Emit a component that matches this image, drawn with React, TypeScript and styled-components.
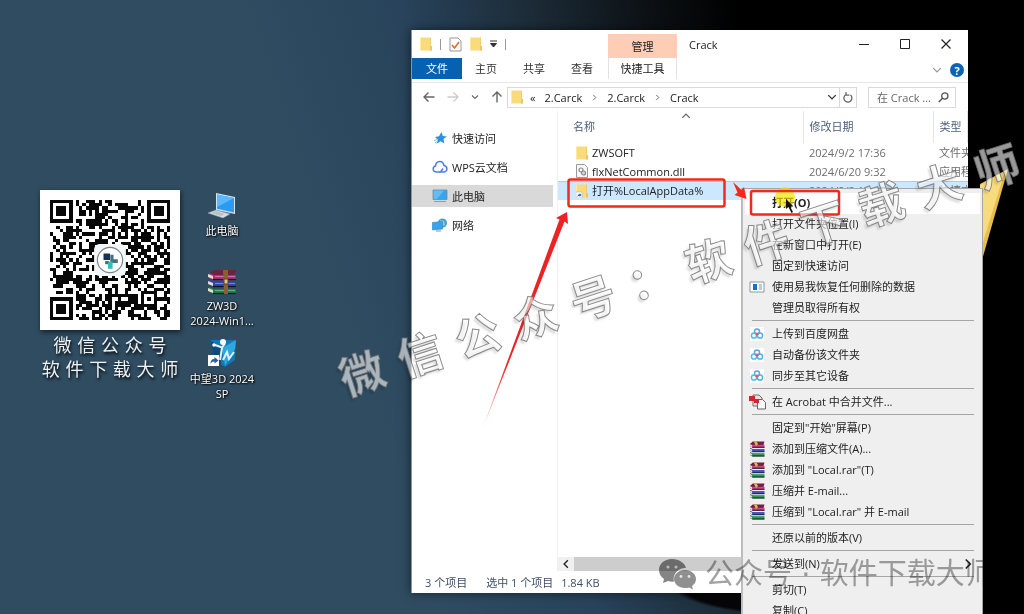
import React from "react";
import styled, { createGlobalStyle } from "styled-components";

const GlobalStyle = createGlobalStyle`
  * { box-sizing: border-box; }
  body { margin: 0; background: #000; }
  button, input { font: inherit; color: inherit; }
  svg { display: block; flex: none; }
`;

const uiFont = `"Open Sans", "Noto Sans CJK SC", sans-serif`;

const Desktop = styled.main`
  position: relative;
  display: flex;
  align-items: flex-start;
  gap: 2px;
  min-height: 100vh;
  padding: 190px 0 0 40px;
  overflow: hidden;
  font: 11px/15px ${uiFont};
  color: #222;
  background:
    radial-gradient(ellipse 120px 32px at 790px 583px, #060608 92%, transparent 100%),
    linear-gradient(90deg, transparent 960px, #000 980px),
    linear-gradient(72deg, #2f4c61 0, #2f4c61 420px, #28435b 570px, #1d2d3a 684px, #0d1216 798px, #000 889px);
`;

const Wallpaper = styled.svg`
  position: absolute;
  right: 14px;
  top: 168px;
`;

const QrPanel = styled.section`
  display: flex;
  flex-direction: column;
  align-items: center;
  width: 140px;
`;

const QrCard = styled.div`
  position: relative;
  padding: 10px;
  margin-bottom: 4px;
  background: #fff;
  box-shadow: 1px 2px 5px rgba(0, 0, 0, 0.6);
`;

const QrCaption = styled.p`
  margin: 0;
  font: 18px/24px "DejaVu Sans", "Noto Sans CJK SC", sans-serif;
  font-weight: 400;
  white-space: nowrap;
  color: #eef2f4;
  text-shadow: 1px 2px 3px #000;
`;

const Shortcuts = styled.nav`
  display: flex;
  flex-direction: column;
  align-items: center;
  width: 80px;
  padding-top: 2px;
`;

const Shortcut = styled.button<{ $space: number }>`
  display: flex;
  flex-direction: column;
  align-items: center;
  gap: 3px;
  width: 100%;
  margin: 0 0 ${(p) => p.$space}px;
  padding: 0;
  border: 0;
  background: none;
  color: #fff;
  text-shadow: 1px 1px 2px #000, 0 0 2px #000;
  span { white-space: pre-line; }
`;

const Window = styled.section`
  position: absolute;
  left: 411px;
  right: 56px;
  top: 30px;
  bottom: 21px;
  display: flex;
  flex-direction: column;
  border-left: 1px solid #8b959c;
  background: #fff;
  box-shadow: 0 0 10px rgba(0, 0, 0, 0.55);
  overflow: hidden;
`;

const Ribbon = styled.header`
  display: flex;
  height: 53px;
  border-bottom: 1px solid #e6e6e6;
`;

const RibbonLeft = styled.div`
  display: flex;
  flex-direction: column;
  width: 196px;
`;

const QuickBar = styled.div`
  display: flex;
  align-items: center;
  gap: 8px;
  height: 28px;
  padding-left: 8px;
`;

const Tick = styled.span`
  width: 1px;
  height: 11px;
  background: #999;
`;

const Tabs = styled.div`
  display: flex;
  height: 21px;
`;

const Tab = styled.button<{ $file?: boolean }>`
  width: ${(p) => (p.$file ? 50 : 48)}px;
  padding: 0;
  border: 0;
  background: ${(p) => (p.$file ? "#0662b0" : "none")};
  color: ${(p) => (p.$file ? "#fff" : "#333")};
`;

const ToolTabs = styled.div`
  display: flex;
  flex-direction: column;
  width: 69px;
  padding-top: 4px;
`;

const ToolTab = styled.button<{ $head?: boolean }>`
  height: ${(p) => (p.$head ? 24 : 21)}px;
  padding: 0;
  border: solid #e2e2e2;
  border-width: ${(p) => (p.$head ? "0" : "0 1px")};
  background: ${(p) => (p.$head ? "#fdcdb5" : "#fff")};
`;

const TitleArea = styled.div`
  display: flex;
  flex: 1;
  flex-direction: column;
`;

const TitleRow = styled.div`
  display: flex;
  align-items: center;
  height: 28px;
  padding: 0 2px 0 12px;
`;

const Title = styled.h1`
  flex: 1;
  margin: 0;
  font-size: 11px;
  font-weight: 400;
`;

const WinButton = styled.button`
  display: grid;
  place-items: center;
  width: 41px;
  height: 28px;
  padding: 0;
  border: 0;
  background: none;
`;

const HelpRow = styled.div`
  display: flex;
  align-items: center;
  justify-content: flex-end;
  gap: 8px;
  height: 23px;
  padding-right: 4px;
`;

const PlainButton = styled.button`
  padding: 0;
  border: 0;
  background: none;
  display: grid;
  place-items: center;
`;

const HelpButton = styled(PlainButton)`
  width: 14px;
  height: 14px;
  border-radius: 50%;
  background: #0a64b4;
  color: #fff;
  font-weight: 700;
`;

const NavBar = styled.div`
  display: flex;
  align-items: center;
  height: 28px;
  padding: 0 12px 0 11px;
`;

const NavArrows = styled.div`
  display: flex;
  align-items: center;
  gap: 12px;
  width: 84px;
`;

const AddressBox = styled.div`
  display: flex;
  flex: 1;
  align-items: center;
  height: 21px;
  border: 1px solid #d9d9d9;
  padding-left: 3px;
`;

const Crumbs = styled.div`
  display: flex;
  flex: 1;
  align-items: center;
  gap: 9px;
  padding-left: 7px;
  white-space: nowrap;
`;

const RefreshButton = styled(PlainButton)`
  width: 17px;
  height: 19px;
  margin-left: 2px;
  border-left: 1px solid #d9d9d9;
`;

const SearchBox = styled.label`
  display: flex;
  align-items: center;
  width: 88px;
  height: 21px;
  margin-left: 11px;
  padding: 0 6px 0 8px;
  border: 1px solid #d9d9d9;
  input {
    flex: 1;
    min-width: 0;
    padding: 0;
    border: 0;
    outline: 0;
    background: none;
    color: #666;
  }
`;

const Body = styled.div`
  display: flex;
  flex: 1;
  min-height: 0;
`;

const Sidebar = styled.nav`
  display: flex;
  flex-direction: column;
  gap: 7px;
  width: 146px;
  padding: 16px 4px 0 0;
  border-right: 1px solid #f0f0f0;
`;

const SideItem = styled.button<{ $active?: boolean }>`
  display: flex;
  align-items: center;
  gap: 4px;
  height: 22px;
  padding: 0 0 0 20px;
  border: 0;
  background: ${(p) => (p.$active ? "#d9d9d9" : "none")};
`;

const Files = styled.div`
  display: flex;
  flex: 1;
  flex-direction: column;
  min-width: 0;
  overflow: hidden;
`;

const FileTable = styled.table`
  width: 100%;
  table-layout: fixed;
  border-collapse: collapse;
  margin-bottom: auto;
`;

const HeadCell = styled.th<{ $width?: number; $indent?: number }>`
  position: relative;
  width: ${(p) => (p.$width ? `${p.$width}px` : "auto")};
  height: 32px;
  padding: 0 0 2px ${(p) => p.$indent ?? 6}px;
  border-right: 1px solid #e5e5e5;
  color: #4c607a;
  font-weight: 400;
  text-align: left;
  white-space: nowrap;
  svg { position: absolute; right: 112px; top: 0; }
`;

const Row = styled.tr<{ $selected?: boolean }>`
  height: 19px;
  background: ${(p) => (p.$selected ? "#cce8ff" : "none")};
  color: #6d6d6d;
  border-top: ${(p) => (p.$selected ? "1px solid #99d1ff" : "0")};
`;

const Cell = styled.td`
  padding: 0 0 0 6px;
  white-space: nowrap;
  overflow: hidden;
`;

const NameCell = styled(Cell)`
  padding-left: 18px;
  color: #222;
  > span { display: flex; align-items: center; gap: 4px; }
`;

const Scroll = styled.div`
  display: flex;
  height: 14px;
  background: #cdcdcd;
`;

const ScrollButton = styled(PlainButton)`
  width: 16px;
  background: #f0f0f0;
`;

const Status = styled.footer`
  display: flex;
  align-items: center;
  gap: 19px;
  height: 22px;
  padding-left: 13px;
  color: #3d4f66;
  span + span + span { margin-left: -11px; }
`;

const Menu = styled.ul`
  position: absolute;
  left: 741px;
  right: 41px;
  top: 188px;
  margin: 0;
  padding: 4px 2px;
  list-style: none;
  border: 1px solid #a6a6a6;
  border-left: 2px solid #bdbdbd;
  background: #efefef;
`;

const Clip = styled.div`
  position: absolute;
  inset: 0;
  overflow: hidden;
`;

const MenuButton = styled.button<{ $hot?: boolean }>`
  display: flex;
  align-items: center;
  width: 100%;
  height: 21px;
  padding: 0 6px 2px 4px;
  border: 0;
  background: ${(p) => (p.$hot ? "#fff" : "none")};
  font-weight: ${(p) => (p.$hot ? 700 : 400)};
  white-space: nowrap;
`;

const MenuIcon = styled.span`
  display: flex;
  width: 23px;
`;

const MenuText = styled.span`
  flex: 1;
  text-align: left;
`;

const Separator = styled.li`
  height: 5px;
  padding-top: 1px;
  margin: 0 6px 0 7px;
  &::before { content: ""; display: block; height: 1px; background: #a5a5a5; }
`;

const Marks = styled.svg`
  position: absolute;
  left: 0;
  top: 0;
  pointer-events: none;
`;

const Slogan = styled.p`
  position: absolute;
  left: 324px;
  top: 242px;
  margin: 0;
  font: 700 45px/60px "DejaVu Sans", "Noto Sans CJK SC", sans-serif;
  white-space: nowrap;
  transform: rotate(-18deg);
  color: rgba(255, 255, 255, 0.6);
  -webkit-text-stroke: 1px rgba(110, 110, 110, 0.8);
  text-shadow: -3px 2px 2px rgba(0, 0, 0, 0.12);
  pointer-events: none;
`;

const Account = styled.div`
  position: absolute;
  left: 658px;
  bottom: 22px;
  display: flex;
  align-items: center;
  gap: 8px;
  font: 29px/36px "DejaVu Sans", "Noto Sans CJK SC", sans-serif;
  white-space: nowrap;
  color: #a3a3a3;
  mix-blend-mode: multiply;
  pointer-events: none;
`;

const SIZE = 37;

function buildModules(): string {
  let seed = 20249;
  const next = () => {
    seed = (seed * 1103515245 + 12345) & 0x7fffffff;
    return (seed >> 8) / 0x7fffff;
  };
  let d = "";
  const ring = (x: number, y: number, cx: number, cy: number) =>
    Math.max(Math.abs(x - cx), Math.abs(y - cy));
  for (let y = 0; y < SIZE; y++) {
    for (let x = 0; x < SIZE; x++) {
      const noise = next() > 0.46;
      const finder = Math.min(ring(x, y, 3, 3), ring(x, y, 33, 3), ring(x, y, 3, 33));
      const align = ring(x, y, 30, 30);
      let dark = noise;
      if (finder <= 4) dark = finder !== 2 && finder !== 4;
      else if (align <= 2) dark = align !== 1;
      else if (ring(x, y, 18, 18) <= 4) dark = false;
      if (dark) d += `M${x} ${y}h1v1h-1z`;
    }
  }
  return d;
}

const modules = buildModules();

const QrCode = () => (
  <svg width="120" height="120" viewBox="0 0 37 37" role="img" aria-label="QR">
    <path d={modules} fill="#080808" shapeRendering="crispEdges" />
    <rect x="13.6" y="13.6" width="9.8" height="9.8" rx="1.6" fill="#f4f7f7" />
    <circle cx="18.5" cy="18.5" r="3.9" fill="#fff" stroke="#788489" strokeWidth=".35" />
    <path d="M16.5 16.5h2v2h-2z" fill="#17324f" />
    <path d="M18.6 16.9h1v1.4h1.3v1.1h-2.3zM17 18.8h1.2v1H17z" fill="#476e84" />
    <path d="M17.9 19h1.4v2.2h-1.4z" fill="#2cc0b8" />
  </svg>
);

const Folder = ({ link }: { link?: boolean }) => (
  <svg width="12" height="14" viewBox="0 0 12 14">
    <path d="M0 .5h10.500V9H12v4.500H0z" fill="#fadb7c" />
    <path d="M10 .5h.8V9H12v4.500h-2z" fill="#ecc75c" />
    <path d="M0 .5h1v13H0z" fill="#ffe9a3" />
    {link && (
      <>
        <path d="M0 8h6v6H0z" fill="#fff" stroke="#9ab" strokeWidth=".5" />
        <path d="M1.500 13c0-2 1-2.700 2-2.700V9.200L5.500 11l-2 1.700v-1c-1 0-1.500.3-2 1.300z" fill="#175cab" />
      </>
    )}
  </svg>
);

const DocCheck = () => (
  <svg width="13" height="15" viewBox="0 0 13 15">
    <path d="M1 1h8l3 3v10H1z" fill="#fff" stroke="#999" />
    <path d="M3 8l2.500 3L10 5" fill="none" stroke="#e26a2c" strokeWidth="1.600" />
  </svg>
);

const DllIcon = () => (
  <svg width="12" height="14" viewBox="0 0 12 14">
    <path d="M.5.5h8l3 3v10H.5z" fill="#f7f7f7" stroke="#999" />
    <circle cx="5" cy="6" r="2" fill="none" stroke="#888" strokeWidth="1.200" />
    <circle cx="7.500" cy="9" r="2" fill="#ddd" stroke="#888" strokeWidth="1.200" />
  </svg>
);

const Chevron = ({ dir, size = 7, color = "#666" }: { dir: "down" | "up" | "left" | "right"; size?: number; color?: string }) => {
  const turn = { down: 0, left: 90, up: 180, right: 270 }[dir];
  return (
    <svg width={size} height={size} viewBox="0 0 8 8">
      <path d="M1 2.500l3 3 3-3" fill="none" stroke={color} strokeWidth="1.100" transform={`rotate(${turn} 4 4)`} />
    </svg>
  );
};

const Arrow = ({ turn, color }: { turn: number; color: string }) => (
  <svg width="12" height="12" viewBox="0 0 12 12">
    <path d="M11.500 6H1M5.500 1.500L1 6l4.500 4.500" fill="none" stroke={color} strokeWidth="1.400" transform={`rotate(${turn} 6 6)`} />
  </svg>
);

const StarIcon = () => (
  <svg width="16" height="14" viewBox="0 0 16 14">
    <path d="M9.500 1l1.300 4 4 .5-3.300 2.600.8 4.400-3.600-2.300L4.500 12.700l1.400-4L3 6l4-.7z" fill="#2a93e0" />
    <path d="M2 10l3-2M3 12l3-2" stroke="#7cc0ef" />
  </svg>
);

const CloudIcon = () => (
  <svg width="16" height="14" viewBox="0 0 16 14">
    <path d="M4 12a3 3 0 0 1-.5-5.900C4 0 11 0 12 5.500a3.300 3.300 0 0 1 .3 6.500H8.500L11 8.500" fill="none" stroke="#4a7fe0" strokeWidth="1.500" />
    <path d="M4 12h4" stroke="#4a7fe0" strokeWidth="1.500" />
  </svg>
);

const MonitorIcon = () => (
  <svg width="16" height="14" viewBox="0 0 16 14">
    <path d="M1 1h14v9.500H1z" fill="#3ba3ea" stroke="#6f8ba0" strokeWidth=".8" />
    <path d="M1.500 1.500H12L5 10H1.500z" fill="#62bdf5" />
    <path d="M2 12.500h12" stroke="#8ba3b3" strokeWidth="1.200" />
  </svg>
);

const NetworkIcon = () => (
  <svg width="16" height="14" viewBox="0 0 16 14">
    <circle cx="10.500" cy="5" r="4.600" fill="#4d9fca" />
    <path d="M8 2l4 1 1 4-3 1z" fill="#8fd0dc" />
    <path d="M.5 4.500l10-1v7.500l-10 1z" fill="#3aa4ea" stroke="#2983c4" strokeWidth=".6" />
    <path d="M4 13h5" stroke="#7d98aa" />
  </svg>
);

const Books = ({ large }: { large?: boolean }) => (
  <svg width={large ? 30 : 16} height={large ? 26 : 16} viewBox="0 0 30 26" preserveAspectRatio="none">
    <path d="M2 5l5-4h22l-2 6H6z" fill="#6d2340" />
    {[
      ["#b72a78", 4],
      ["#3046b4", 11],
      ["#178447", 18],
    ].map(([color, y]) => (
      <g key={color} transform={`translate(0 ${y})`}>
        <path d="M2 0l5 2h22v5H7L2 5z" fill={color as string} />
        <path d="M1 1l5 2v3L1 4z" fill="#e9ddd0" />
        <path d="M6 6.500h23" stroke="#151515" strokeWidth="1.200" />
        <path d="M8 3.500h20" stroke="#fff" strokeOpacity=".35" />
      </g>
    ))}
    {large ? (
      <>
        <path d="M16 1h5v24h-4z" fill="#8d5f2c" />
        <path d="M17 10h4v5h-4z" fill="#ddc58d" stroke="#5a4020" />
      </>
    ) : (
      <path d="M9 1l5 0 3 4-4 3z" fill="#e5b93f" />
    )}
  </svg>
);

const PcLarge = () => (
  <svg width="32" height="28" viewBox="0 0 32 28">
    <path d="M10 1l19 4v17l-19-4z" fill="#d8e4ec" />
    <path d="M11 2.500l17 3.600V20.500L11 16.800z" fill="#2c9af0" />
    <path d="M11 2.500l17 3.600L11 15z" fill="#5cb8fa" />
    <path d="M2 21l8-3 14 4-7 4z" fill="#d9dfe4" stroke="#8fa0ac" strokeWidth=".6" />
    <path d="M5 21l5-2 9 3-4 2z" fill="#b6c2ca" />
  </svg>
);

const ZwLarge = () => (
  <svg width="32" height="30" viewBox="0 0 32 30">
    <path d="M4 2h26l-1 20-10 7-10-6z" fill="#1377b7" />
    <path d="M4 2l11 8v17l-6-4z" fill="#0a4c7c" />
    <path d="M16 10L30 2l-1 9-10 17z" fill="#2fa6de" />
    <path d="M9 7l7 2.500 3-4M16 10l-2 12M17 22l4-8 2 7 5-7" stroke="#e2f1f9" strokeWidth="2" fill="none" />
    <circle cx="17" cy="4" r="3" fill="#fff" />
    <circle cx="8" cy="7" r="1.800" fill="#fff" />
    <path d="M2 17h11v11H2z" fill="#fff" />
    <path d="M4.500 26c0-3 1-5 4-5v-2l4 3.400-4 3v-2c-2 0-3 .6-4 2.600z" fill="#225fae" />
  </svg>
);

const CardIcon = () => (
  <svg width="16" height="14" viewBox="0 0 16 14">
    <path d="M1 2h14v10H1z" fill="#fff" stroke="#8a97a0" />
    <path d="M4 4h4v6H4z" fill="#0f72d4" />
    <path d="M10 5h3M10 7h3M10 9h3" stroke="#7d97b0" />
  </svg>
);

const NetDisk = () => (
  <svg width="16" height="16" viewBox="0 0 16 16">
    <path d="M1 1h14v14H1z" fill="#fff" />
    <g fill="none" strokeWidth="1.500">
      <circle cx="8" cy="5.500" r="2.500" stroke="#5aa5e0" />
      <circle cx="5" cy="9.500" r="2.600" stroke="#4fbde6" />
      <circle cx="11" cy="9.500" r="2.600" stroke="#4fb0e6" />
    </g>
    <circle cx="8" cy="8" r="1.500" fill="#ec5266" />
  </svg>
);

const AcrobatIcon = () => (
  <svg width="18" height="18" viewBox="0 0 18 18">
    <path d="M4 2h6l3 3v8H4z" fill="#e4e4e4" stroke="#7b6763" />
    <path d="M8.500 6.500h5l3 3V16h-8z" fill="#f8f8f8" stroke="#6e6664" />
    <path d="M0 3h6v5H0zM5 6h5v4H5z" fill="#d3262c" />
  </svg>
);

type Entry = { text: string; icon?: React.ReactNode; sub?: boolean; hot?: boolean } | null;

const entries: Entry[] = [
  { text: "打开(O)", hot: true },
  { text: "打开文件夹位置(I)" },
  { text: "在新窗口中打开(E)" },
  { text: "固定到快速访问" },
  { text: "使用易我恢复任何删除的数据", icon: <CardIcon /> },
  { text: "管理员取得所有权" },
  null,
  { text: "上传到百度网盘", icon: <NetDisk /> },
  { text: "自动备份该文件夹", icon: <NetDisk /> },
  { text: "同步至其它设备", icon: <NetDisk /> },
  null,
  { text: "在 Acrobat 中合并文件...", icon: <AcrobatIcon /> },
  null,
  { text: "固定到\"开始\"屏幕(P)" },
  { text: "添加到压缩文件(A)...", icon: <Books /> },
  { text: "添加到 \"Local.rar\"(T)", icon: <Books /> },
  { text: "压缩并 E-mail...", icon: <Books /> },
  { text: "压缩到 \"Local.rar\" 并 E-mail", icon: <Books /> },
  null,
  { text: "还原以前的版本(V)" },
  null,
  { text: "发送到(N)", sub: true },
  null,
  { text: "剪切(T)" },
  { text: "复制(C)" },
];

const files = [
  { name: "ZWSOFT", date: "2024/9/2 17:36", type: "文件夹", icon: <Folder /> },
  { name: "flxNetCommon.dll", date: "2024/6/20 9:32", type: "应用程序扩展", icon: <DllIcon /> },
  { name: "打开%LocalAppData%", date: "2024/9/2 18:07", type: "快捷方式", icon: <Folder link />, selected: true },
];

const Explorer = () => (
  <Window>
    <Ribbon>
      <RibbonLeft>
        <QuickBar>
          <Folder />
          <Tick />
          <DocCheck />
          <Folder />
          <svg width="7" height="8" viewBox="0 0 7 8">
            <path d="M0 1h7M0.500 3.500h6L3.500 7z" stroke="#333" fill="#333" />
          </svg>
          <Tick />
        </QuickBar>
        <Tabs>
          <Tab $file>文件</Tab>
          <Tab>主页</Tab>
          <Tab>共享</Tab>
          <Tab>查看</Tab>
        </Tabs>
      </RibbonLeft>
      <ToolTabs>
        <ToolTab $head>管理</ToolTab>
        <ToolTab>快捷工具</ToolTab>
      </ToolTabs>
      <TitleArea>
        <TitleRow>
          <Title>Crack</Title>
          <WinButton aria-label="最小化">
            <svg width="10" height="10"><path d="M0 5.500h10" stroke="#222" /></svg>
          </WinButton>
          <WinButton aria-label="最大化">
            <svg width="10" height="10"><path d="M.5.5h9v9h-9z" fill="none" stroke="#222" /></svg>
          </WinButton>
          <WinButton aria-label="关闭">
            <svg width="10" height="10"><path d="M.5.500l9 9M9.500.5l-9 9" stroke="#222" strokeWidth="1.200" /></svg>
          </WinButton>
        </TitleRow>
        <HelpRow>
          <PlainButton aria-label="展开功能区"><Chevron dir="down" size={10} color="#999" /></PlainButton>
          <HelpButton>?</HelpButton>
        </HelpRow>
      </TitleArea>
    </Ribbon>
    <NavBar>
      <NavArrows>
        <PlainButton aria-label="后退"><Arrow turn={0} color="#666" /></PlainButton>
        <PlainButton aria-label="前进"><Arrow turn={180} color="#ccc" /></PlainButton>
        <PlainButton aria-label="最近"><Chevron dir="down" size={8} /></PlainButton>
        <PlainButton aria-label="上移"><Arrow turn={90} color="#666" /></PlainButton>
      </NavArrows>
      <AddressBox>
        <Folder />
        <Crumbs>
          <span>«</span>
          <span>2.Carck</span>
          <Chevron dir="right" />
          <span>2.Carck</span>
          <Chevron dir="right" />
          <span>Crack</span>
        </Crumbs>
        <Chevron dir="down" size={10} color="#333" />
        <RefreshButton aria-label="刷新">
          <svg width="10" height="11" viewBox="0 0 10 11">
            <path d="M7.500 3A4 4 0 1 1 3 2.500M3 0v3.200h3.500" fill="none" stroke="#666" strokeWidth="1.300" />
          </svg>
        </RefreshButton>
      </AddressBox>
      <SearchBox>
        <input aria-label="搜索" defaultValue="在 Crack ..." />
        <svg width="11" height="11" viewBox="0 0 11 11">
          <circle cx="6.800" cy="4" r="3.100" fill="none" stroke="#555" strokeWidth="1.300" />
          <path d="M4.500 6.300L.8 10" stroke="#555" strokeWidth="1.500" />
        </svg>
      </SearchBox>
    </NavBar>
    <Body>
      <Sidebar>
        <SideItem><StarIcon />快速访问</SideItem>
        <SideItem><CloudIcon />WPS云文档</SideItem>
        <SideItem $active><MonitorIcon />此电脑</SideItem>
        <SideItem><NetworkIcon />网络</SideItem>
      </Sidebar>
      <Files>
        <FileTable>
          <thead>
            <tr>
              <HeadCell $width={245} $indent={15}>名称<Chevron dir="up" size={10} /></HeadCell>
              <HeadCell $width={130}>修改日期</HeadCell>
              <HeadCell>类型</HeadCell>
            </tr>
          </thead>
          <tbody>
            {files.map((f) => (
              <Row key={f.name} $selected={f.selected}>
                <NameCell><span>{f.icon}{f.name}</span></NameCell>
                <Cell>{f.date}</Cell>
                <Cell>{f.type}</Cell>
              </Row>
            ))}
          </tbody>
        </FileTable>
        <Scroll>
          <ScrollButton aria-label="向左滚动"><Chevron dir="left" size={10} color="#222" /></ScrollButton>
        </Scroll>
      </Files>
    </Body>
    <Status>
      <span>3 个项目</span>
      <span>选中 1 个项目</span>
      <span>1.84 KB</span>
    </Status>
  </Window>
);

export default function App() {
  return (
    <>
      <GlobalStyle />
      <Desktop>
        <Wallpaper width="30" height="94" viewBox="0 0 30 94">
          <path d="M0 16L28 1 2 92H0z" fill="#e8bd4d" />
          <path d="M0 17L25 3 0 84z" fill="#f8db7c" />
        </Wallpaper>
        <QrPanel>
          <QrCard><QrCode /></QrCard>
          <QrCaption>微 信 公 众 号</QrCaption>
          <QrCaption>软 件 下 载 大 师</QrCaption>
        </QrPanel>
        <Shortcuts>
          <Shortcut $space={31}><PcLarge /><span>此电脑</span></Shortcut>
          <Shortcut $space={10}><Books large /><span>{"ZW3D\n2024-Win1..."}</span></Shortcut>
          <Shortcut $space={0}><ZwLarge /><span>{"中望3D 2024\nSP"}</span></Shortcut>
        </Shortcuts>
        <Explorer />
        <Clip>
          <Menu role="menu">
            {entries.map((e, i) =>
              e === null ? (
                <Separator key={i} role="separator" />
              ) : (
                <li key={i} role="none">
                  <MenuButton role="menuitem" $hot={e.hot}>
                    <MenuIcon>{e.icon}</MenuIcon>
                    <MenuText>{e.text}</MenuText>
                    {e.sub && <Chevron dir="right" size={12} color="#222" />}
                  </MenuButton>
                </li>
              )
            )}
          </Menu>
        </Clip>
        <Marks width="1024" height="614" viewBox="0 0 1024 614" aria-hidden="true">
          <defs>
            <linearGradient id="tail" x1="0" y1="1" x2="0" y2="0">
              <stop offset="0" stopColor="#e33" stopOpacity=".2" />
              <stop offset=".3" stopColor="#e22" />
            </linearGradient>
          </defs>
          <circle cx="785" cy="197" r="10" fill="#f2e600" fillOpacity=".7" />
          <g fill="none" stroke="#f5281e" strokeWidth="2.500">
            <rect x="568.500" y="179.500" width="156" height="27" rx="2" />
            <rect x="751" y="191" width="88" height="23.500" rx="2" />
          </g>
          <path d="M482 430L559.500 219.500 556 218 567 212 568 224 564.500 221.500z" fill="url(#tail)" />
          <path d="M733 182l8.500 8 2.500-3 2.500 12-12-4 3-2.500z" fill="#f5281e" />
          <path d="M786 199v10l2.500-2 3 6 1.500-1-3-5.500h3.500z" fill="#111" />
        </Marks>
        <Slogan>微 信 公 众 号 ： 软 件 下 载 大 师</Slogan>
        <Account>
          <svg width="39" height="32" viewBox="0 0 39 32">
            <path d="M14 1C6 1 1 6 1 12c0 4 2 7 5 9l-1 4 5-2c2 .6 4 .8 6 .6-2-8 5-14 12-13.600C27 5 21 1 14 1z" fill="#858585" />
            <path d="M27 12c-6 0-11 4-11 9s5 9 11 9c1.500 0 3-.3 4-.6l4 2-1-3.400c2.500-1.700 4-4 4-7 0-5-5-9-11-9z" fill="#909090" />
            <g fill="#e4e4e4">
              <circle cx="10" cy="9" r="1.600" /><circle cx="18" cy="9" r="1.600" />
              <circle cx="23" cy="18.500" r="1.400" /><circle cx="31" cy="18.500" r="1.400" />
            </g>
          </svg>
          <span>公众号 · 软件下载大师</span>
        </Account>
      </Desktop>
    </>
  );
}
